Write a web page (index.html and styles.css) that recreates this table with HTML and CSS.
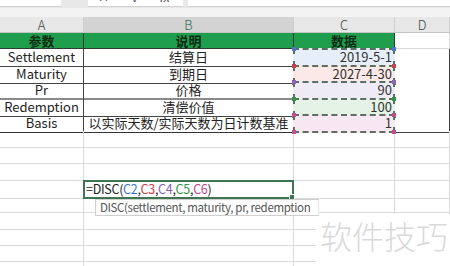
FILE: index.html
```html
<!DOCTYPE html>
<html lang="zh">
<head>
<meta charset="utf-8">
<title>DISC</title>
<link rel="stylesheet" href="styles.css">
</head>
<body>
<div class="app">
  <div class="toolbar">
    <div class="box namebox"><span class="cut">ness</span></div>
    <div class="grip"><span class="cut">⁝</span></div>
    <div class="box fxbox">
      <span class="cut x">✕</span><span class="cut ok">✓</span><span class="cut fx">fx</span>
    </div>
    <div class="sep"></div>
    <div class="box formula"><span class="cut">=DISC(C2,C3,C4,C5,C6)</span></div>
  </div>
  <div class="band"></div>

  <div class="sheet">
    <div class="row hdr">
      <div class="c">A</div><div class="c sel">B</div><div class="c">C</div><div class="c">D</div>
    </div>
    <div class="row head">
      <div class="c">参数</div><div class="c">说明</div><div class="c">数据</div><div class="c d"></div>
    </div>
    <div class="row data">
      <div class="c">Settlement</div><div class="c">结算日</div>
      <div class="c num"><div class="ref r1">2019-5-1</div></div><div class="c d"></div>
    </div>
    <div class="row data">
      <div class="c">Maturity</div><div class="c">到期日</div>
      <div class="c num"><div class="ref r2">2027-4-30</div></div><div class="c d"></div>
    </div>
    <div class="row data thick">
      <div class="c">Pr</div><div class="c">价格</div>
      <div class="c num"><div class="ref r3">90</div></div><div class="c d"></div>
    </div>
    <div class="row data">
      <div class="c">Redemption</div><div class="c">清偿价值</div>
      <div class="c num"><div class="ref r4">100</div></div><div class="c d"></div>
    </div>
    <div class="row data last">
      <div class="c">Basis</div><div class="c">以实际天数/实际天数为日计数基准</div>
      <div class="c num"><div class="ref r5">1</div></div><div class="c d"></div>
    </div>
    <div class="row"><div class="c"></div><div class="c"></div><div class="c"></div><div class="c"></div></div>
    <div class="row"><div class="c"></div><div class="c"></div><div class="c"></div><div class="c"></div></div>
    <div class="row"><div class="c"></div><div class="c"></div><div class="c"></div><div class="c"></div></div>
    <div class="row">
      <div class="c"></div>
      <div class="c edit">
        <div class="editor">=DISC(<span class="k1">C2</span>,<span class="k2">C3</span>,<span class="k3">C4</span>,<span class="k4">C5</span>,<span class="k5">C6</span>)</div>
        <div class="tip">DISC(settlement, maturity, pr, redemption</div>
      </div>
      <div class="c"></div><div class="c"></div>
    </div>
    <div class="row"><div class="c"></div><div class="c"></div><div class="c"></div><div class="c"></div></div>
    <div class="row"><div class="c"></div><div class="c"></div><div class="c"></div><div class="c"></div></div>
    <div class="row"><div class="c"></div><div class="c"></div><div class="c"></div><div class="c"></div></div>
    <div class="row"><div class="c"></div><div class="c"></div><div class="c"></div><div class="c"></div></div>
    <div class="row"><div class="c"></div><div class="c"></div><div class="c"></div><div class="c"></div></div>
    <div class="watermark">软件技巧</div>
  </div>
</div>
</body>
</html>
```

FILE: styles.css
```css
* { box-sizing: border-box; }
html, body { margin: 0; padding: 0; }
body {
  width: 450px;
  height: 266px;
  overflow: hidden;
  background: #fff;
  font-family: "Noto Sans CJK SC", "Noto Sans", sans-serif;
  color: #222;
}
.app { width: 450px; height: 266px; overflow: hidden; }

/* formula bar strip (mostly scrolled out of view) */
.toolbar {
  display: flex;
  height: 8px;
  background: #e8e8e8;
  overflow: hidden;
}
.box {
  background: #fff;
  height: 7px;
  overflow: hidden;
  border-bottom: 1px solid #d0d0d0;
}
.cut {
  display: inline-block;
  font-size: 12.5px;
  line-height: 16px;
  margin-top: -11px;
  color: #333;
}
.namebox { width: 61px; }
.grip { width: 27px; text-align: center; overflow: hidden; height: 8px; }
.grip .cut { color: #777; }
.fxbox { width: 95px; display: flex; padding-left: 10px; }
.fxbox .x { width: 34px; color: #555; }
.fxbox .ok { width: 27px; color: #555; }
.fxbox .fx { font-style: italic; color: #555; }
.sep { width: 5px; }
.formula { flex: 1; padding-left: 2px; }

.band { height: 9px; background: #f3f3f3; }

/* sheet */
.sheet { position: relative; }
.row {
  display: grid;
  grid-template-columns: 84px 210px 101px 1fr;
  height: 16.4px;
}
.c {
  border-right: 1px solid #dadada;
  border-bottom: 1px solid #dadada;
  font-size: 13px;
  line-height: 16px;
  text-align: center;
  white-space: nowrap;
}

.hdr { height: 16px; }
.hdr .c {
  background: #e7e7e7;
  color: #444;
  font-weight: 300;
  line-height: 15px;
  border-right-color: #cfcfcf;
  border-bottom-color: #c4c4c4;
}
.hdr .sel { background: #d3d3d3; color: #3d6b52; }

.head .c {
  background: #1f9f4d;
  color: #0c2a14;
  font-weight: bold;
  line-height: 15px;
  border-color: #2d3b31;
}
.head .d, .data .d { background: #fff; border-right-color: #dadada; border-bottom-color: #dadada; }

.data .c { border-color: #444; line-height: 15px; }
.data.thick .c:nth-child(-n+2) { border-bottom: 2px solid #8a8a8a; }
.data.last .c:nth-child(-n+2) { border-bottom-color: #333; }

/* formula reference highlight in column C */
.num { padding: 0; border-right-color: #dadada !important; border-bottom-color: transparent !important; }
.ref {
  position: relative;
  height: calc(100% + 2px);
  margin: -1px -1px 0 -1px;
  border: 2px dashed #5d6e63;
  text-align: right;
  padding-right: 1px;
  line-height: 14px;
  color: #333;
}
.ref::before, .ref::after {
  content: "";
  position: absolute;
  width: 4px;
  height: 4px;
  left: -3px;
}
.ref::before { top: -3px; }
.ref::after { bottom: -3px; }
.r1 { background: #e6eef9; }
.r1::before, .r1::after { background: #4a78c8; box-shadow: 100px 0 0 #4a78c8; }
.r2 { background: #fbe9e7; }
.r2::before, .r2::after { background: #c5444c; box-shadow: 100px 0 0 #c5444c; }
.r3 { background: #eeebf6; }
.r3::before, .r3::after { background: #8a63b8; box-shadow: 100px 0 0 #8a63b8; }
.r4 { background: #e5f3e7; }
.r4::before, .r4::after { background: #36924a; box-shadow: 100px 0 0 #36924a; }
.r5 { background: #f6e7f0; }
.r5::before, .r5::after { background: #c04f8e; box-shadow: 100px 0 0 #c04f8e; }

/* cell being edited */
.edit { position: relative; text-align: left; }
.editor {
  position: relative;
  height: calc(100% + 2px);
  margin: -1px -1px 0 -1px;
  border: 2px solid #3f7553;
  padding-left: 1px;
  line-height: 14px;
  font-size: 12.5px;
  letter-spacing: -0.3px;
  color: #222;
}
.editor::after {
  content: "";
  position: absolute;
  right: -3px;
  bottom: -3px;
  width: 4px;
  height: 4px;
  background: #3f7553;
  border: 1px solid #fff;
}
.k1 { color: #3b73d1; }
.k2 { color: #cf3d47; }
.k3 { color: #8c5cc0; }
.k4 { color: #2e9749; }
.k5 { color: #c2438d; }

.tip {
  position: absolute;
  left: 11px;
  top: 18px;
  width: 224px;
  height: 17px;
  background: #fff;
  border: 1px solid #cfcfcf;
  border-right-color: #e8e8e8;
  padding-left: 4px;
  font-size: 11.5px;
  letter-spacing: -0.35px;
  line-height: 15px;
  color: #555;
  overflow: hidden;
  white-space: nowrap;
  z-index: 2;
}

.watermark {
  position: absolute;
  left: 316px;
  top: 197px;
  width: 134px;
  height: 60px;
  padding: 1px 0 0 4px;
  font-size: 32px;
  line-height: 40px;
  font-weight: 300;
  color: #d9d9d9;
  background: #fff;
}
```
